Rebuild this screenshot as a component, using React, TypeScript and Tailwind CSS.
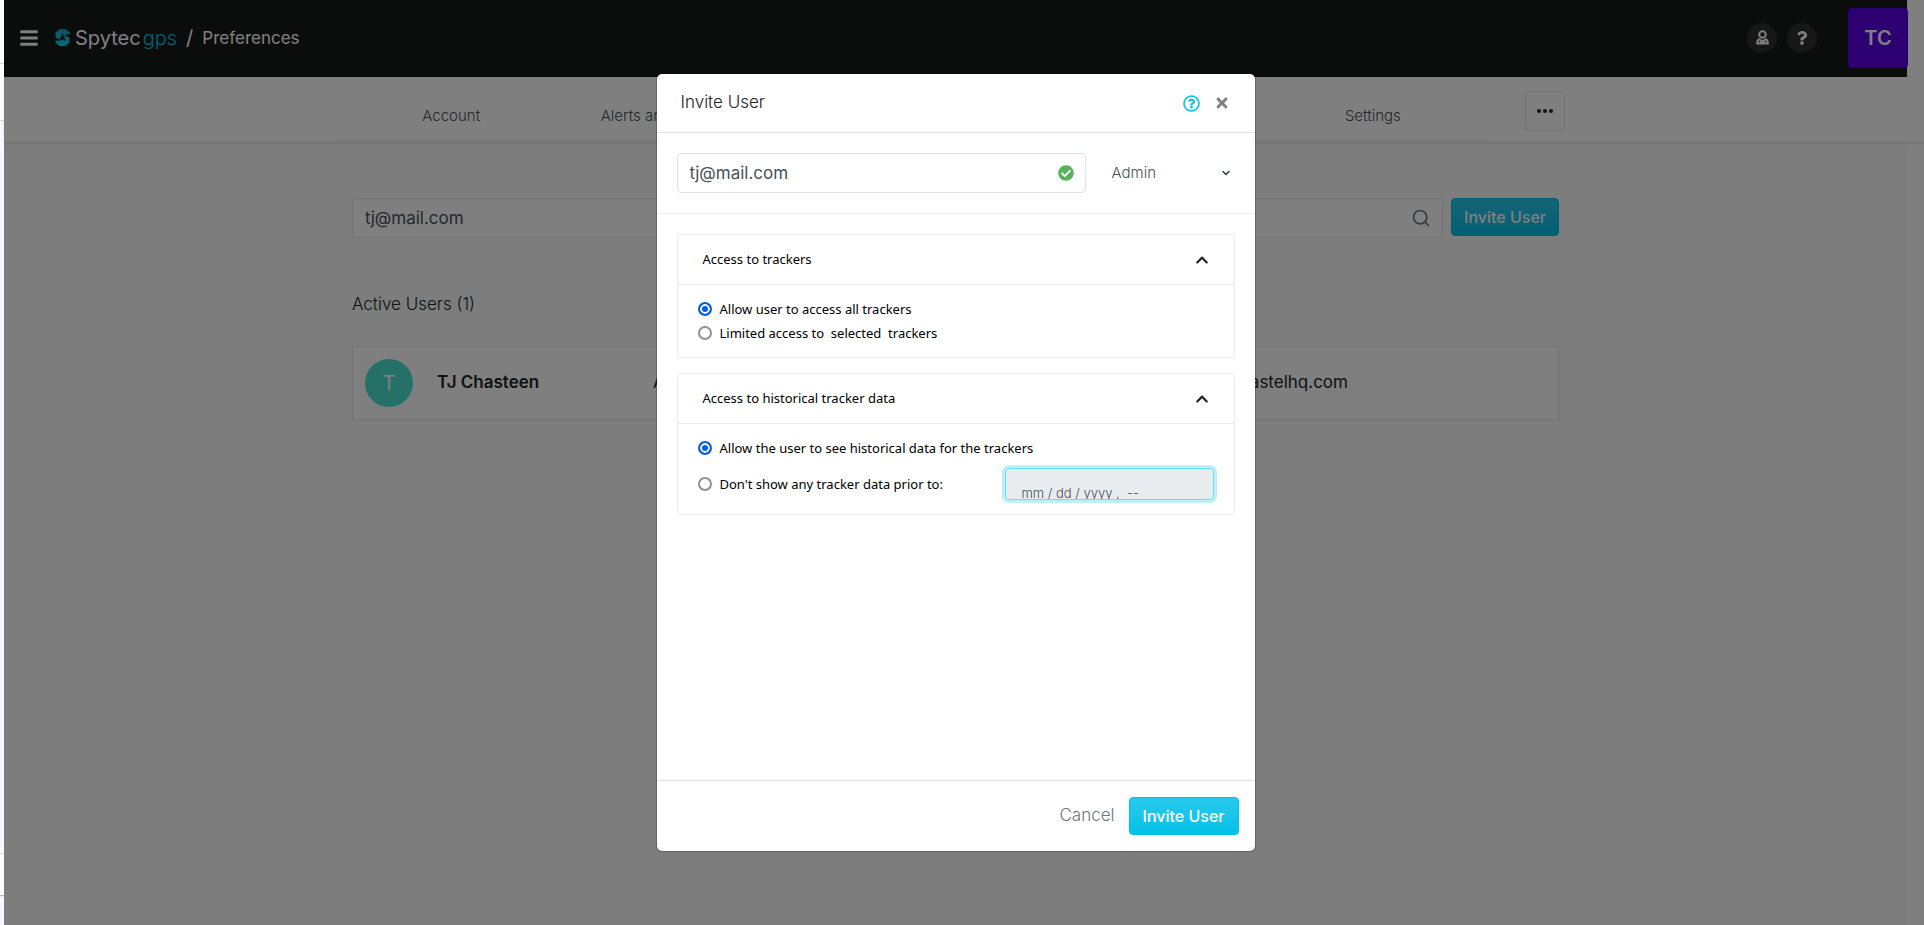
import { useState } from 'react'
import { FaBars, FaCheckCircle, FaChevronUp, FaQuestion, FaRegQuestionCircle, FaTimes } from 'react-icons/fa'
import { ChevronDown, Search } from 'lucide-react'

const tabs = ['Account', 'Alerts and Notifications', 'Users', 'Billing', 'Settings']

function Logo() {
  return (
    <a href="#" className="flex items-center gap-[5px] text-xl leading-none">
      <svg width="15" height="17" viewBox="0 0 15 17" aria-hidden="true">
        <defs>
          <linearGradient id="logo" x1="0" y1="0" x2="0" y2="1">
            <stop offset="0" stopColor="#10a4c4" />
            <stop offset="1" stopColor="#14d2f5" />
          </linearGradient>
        </defs>
        <path
          fill="url(#logo)"
          d="M4.500 0H10.500L14.500 3V5.500H9.500L10.800 7.500H12.500C13.700 7.500 14.500 8.300 14.500 9.500V13.500L10.500 17H4.500L.5 13.500V11.500H4.500L4 9.500H2.500C1.300 9.500 .5 8.700 .5 7.500V3.500Z"
        />
        <path fill="#161a18" d="M7.500 4L11 12L7.500 10.200L4 12Z" />
      </svg>
      <span className="text-white">
        Spytec<span className="ml-[2px] font-light text-[#00c1e7]">gps</span>
      </span>
    </a>
  )
}

function UserIcon() {
  return (
    <svg width="13" height="15" viewBox="0 0 13 15" fill="none" stroke="currentColor" strokeWidth="2" aria-hidden="true">
      <circle cx="6.500" cy="4.500" r="3.300" />
      <path d="M3.500 9C1.800 9.500 1.200 11 1.200 13.500H11.800C11.800 11 11.200 9.500 9.500 9M3.500 9.500L6.500 11.500L9.500 9.500M4.500 11.500V13.500M8.500 11.500V13.500" />
    </svg>
  )
}

function TopBar() {
  return (
    <header className="mr-[17px] flex h-[77px] items-center bg-[#161a18] pb-[2px] pl-[15px] text-white">
      <button type="button" aria-label="Menu" className="mr-4">
        <FaBars className="size-5" />
      </button>
      <Logo />
      <span className="mx-[9px] text-xl">/</span>
      <h1 className="pt-[2px] text-[17px]">Preferences</h1>
      <div className="-mr-px ml-auto flex items-center">
        <button type="button" aria-label="Profile" className="flex size-[30px] items-center justify-center rounded-full bg-[#2e2e2e]">
          <UserIcon />
        </button>
        <button type="button" aria-label="Help" className="ml-[10px] flex size-[30px] items-center justify-center rounded-full bg-[#2e2e2e]">
          <FaQuestion className="size-[14px]" />
        </button>
        <div className="ml-[31px] flex size-[60px] items-center justify-center rounded-sm bg-[#5a00e4] text-xl font-semibold">TC</div>
      </div>
    </header>
  )
}

function TabBar() {
  return (
    <div className="relative h-[65px] bg-white pr-[17px] shadow-sm">
      <div className="mx-auto flex h-full max-w-[1239px]">
        <nav className="flex max-w-[1152px] flex-1 border-b-4 border-[#f4f4f4]">
          {tabs.map((tab) => (
            <a key={tab} href="#" className="flex flex-1 items-center justify-center pt-[18px] text-[15px] font-light whitespace-nowrap text-[#495057]">
              {tab}
            </a>
          ))}
        </nav>
        <button
          type="button"
          aria-label="More"
          className="mt-[14px] ml-[37px] flex size-10 items-center justify-center rounded border border-[#dee2e6]"
        >
          <svg width="16" height="4" viewBox="0 0 16 4" fill="#222" aria-hidden="true">
            <circle cx="2" cy="2" r="2" />
            <circle cx="8" cy="2" r="2" />
            <circle cx="14" cy="2" r="2" />
          </svg>
        </button>
      </div>
    </div>
  )
}

function UsersPage() {
  return (
    <main className="mr-[17px] flex-1 bg-[#fafafa] pt-14">
      <div className="mx-auto max-w-[1207px]">
        <div className="flex items-start gap-2">
          <div className="relative flex-1">
            <input
              type="text"
              aria-label="Search users"
              defaultValue="tj@mail.com"
              className="h-10 w-full rounded border border-[#dee2e6] bg-white px-3 text-[17px] text-[#495057]"
            />
            <Search className="absolute top-[10px] right-3 size-5 text-[#6c757d]" />
          </div>
          <button
            type="button"
            className="h-[38px] rounded-sm border border-[#00c1e7] bg-linear-to-b from-[#26c9eb] to-[#00c1e7] px-3 font-medium whitespace-nowrap text-white"
          >
            Invite User
          </button>
        </div>
        <h2 className="mt-[54px] text-[17px] leading-6 font-light text-[#212529]">Active Users (1)</h2>
        <ul className="mt-[30px]">
          <li className="flex h-[74px] items-center border border-[#dee2e6] bg-white pl-3 text-[17px] text-[#212529]">
            <span className="flex size-12 items-center justify-center rounded-full bg-[#4ce2cf] text-xl text-white">T</span>
            <span className="ml-6 w-[216px] font-semibold">TJ Chasteen</span>
            <span className="w-[560px]">Admin</span>
            <span>tj@pastelhq.com</span>
          </li>
        </ul>
      </div>
    </main>
  )
}

type OptionProps = {
  name: string
  label: string
  checked: boolean
  onChange: () => void
}

function Option({ name, label, checked, onChange }: OptionProps) {
  return (
    <label className="flex items-center gap-2 text-[13px] leading-6 whitespace-pre text-black">
      <input
        type="radio"
        name={name}
        checked={checked}
        onChange={onChange}
        className="size-[14px] appearance-none rounded-full border-2 border-[#8f8f9d] bg-white checked:border-[#0060df] checked:bg-[#0060df] checked:shadow-[inset_0_0_0_2px_#fff]"
      />
      {label}
    </label>
  )
}

function Section({ title, children }: { title: string; children: React.ReactNode }) {
  return (
    <section className="rounded border border-[#e9ecef] font-['Noto_Sans',sans-serif]">
      <div className="flex h-[50px] items-center justify-between border-b border-[#e9ecef] px-[25px]">
        <h3 className="text-[13px] text-black">{title}</h3>
        <button type="button" aria-label={`Collapse ${title}`}>
          <FaChevronUp className="size-[14px] text-[#212529]" />
        </button>
      </div>
      {children}
    </section>
  )
}

function InviteDialog() {
  const [allTrackers, setAllTrackers] = useState(true)
  const [history, setHistory] = useState(true)

  return (
    <div
      role="dialog"
      aria-labelledby="invite-title"
      className="flex min-h-[779px] w-full max-w-[600px] flex-col rounded-md border border-black/20 bg-white bg-clip-padding"
    >
      <div className="flex h-[59px] items-center border-b border-[#dee2e6] pr-[25px] pl-6">
        <h2 id="invite-title" className="text-[17px] font-light text-[#212529]">
          Invite User
        </h2>
        <button type="button" aria-label="Help" className="ml-auto text-[#00c1e7]">
          <FaRegQuestionCircle className="size-[17px]" />
        </button>
        <button type="button" aria-label="Close" className="ml-[14px] text-[#7f7f7f]">
          <FaTimes className="size-4" />
        </button>
      </div>

      <div className="flex h-[81px] items-center border-b border-[#e9ecef] px-5">
        <div className="relative flex-1">
          <input
            type="email"
            aria-label="Email"
            defaultValue="tj@mail.com"
            className="h-10 w-full rounded border border-[#dee2e6] px-3 text-[17px] text-[#495057]"
          />
          <FaCheckCircle className="absolute top-3 right-3 size-4 text-[#56b35a]" />
        </div>
        <div className="relative ml-[14px] w-[135px]">
          <select aria-label="Role" defaultValue="Admin" className="h-10 w-full appearance-none px-3 text-[15px] font-light text-[#495057]">
            <option>Admin</option>
            <option>User</option>
          </select>
          <ChevronDown className="pointer-events-none absolute top-[14px] right-[3px] size-3 text-[#343a40]" strokeWidth={3} />
        </div>
      </div>

      <div className="flex flex-1 flex-col gap-[15px] px-5 pt-5">
        <Section title="Access to trackers">
          <div className="px-5 pt-3 pb-3">
            <Option name="trackers" label="Allow user to access all trackers" checked={allTrackers} onChange={() => setAllTrackers(true)} />
            <Option name="trackers" label="Limited access to  selected  trackers" checked={!allTrackers} onChange={() => setAllTrackers(false)} />
          </div>
        </Section>
        <Section title="Access to historical tracker data">
          <div className="px-5 pt-3 pb-[14px]">
            <Option name="history" label="Allow the user to see historical data for the trackers" checked={history} onChange={() => setHistory(true)} />
            <div className="mt-2 flex items-center justify-between">
              <Option name="history" label="Don't show any tracker data prior to:" checked={!history} onChange={() => setHistory(false)} />
              <input
                type="text"
                aria-label="Prior to date"
                placeholder="mm / dd / yyyy ,  --"
                className="h-8 w-[209px] rounded border border-[#5fe4fb] bg-[#e9ecef] px-4 pt-[18px] font-[Inter,sans-serif] text-[13px] font-light text-[#495057] ring-3 ring-[#bdf0fa] outline-none placeholder:text-[#495057]"
              />
            </div>
          </div>
        </Section>
      </div>

      <div className="flex h-[71px] items-center justify-end gap-[14px] border-t border-[#dee2e6] pr-4">
        <button type="button" className="text-[17px] font-light text-[#6c757d]">
          Cancel
        </button>
        <button
          type="button"
          className="h-[38px] rounded-sm border border-[#00c1e7] bg-linear-to-b from-[#26c9eb] to-[#00c1e7] px-[13px] font-medium text-white"
        >
          Invite User
        </button>
      </div>
    </div>
  )
}

export default function App() {
  return (
    <div className="flex min-h-screen font-[Inter,sans-serif] text-base">
      <div className="flex w-1 flex-col bg-[#f6f9fe]">
        <div className="h-16 border-b border-[#d5d8dc] bg-white" />
        <div className="h-[57px] border-b border-[#d5d8dc] bg-white" />
        <div className="mt-auto mb-[29px] h-[43px] border-t border-b border-t-[#e3e5ea] border-b-[#b4b7be] bg-white shadow-sm" />
      </div>
      <div className="relative flex flex-1 flex-col bg-white">
        <TopBar />
        <TabBar />
        <UsersPage />
        <div className="absolute inset-0 flex items-start justify-center bg-black/50 pt-[73px] pr-[17px]">
          <InviteDialog />
        </div>
      </div>
    </div>
  )
}
